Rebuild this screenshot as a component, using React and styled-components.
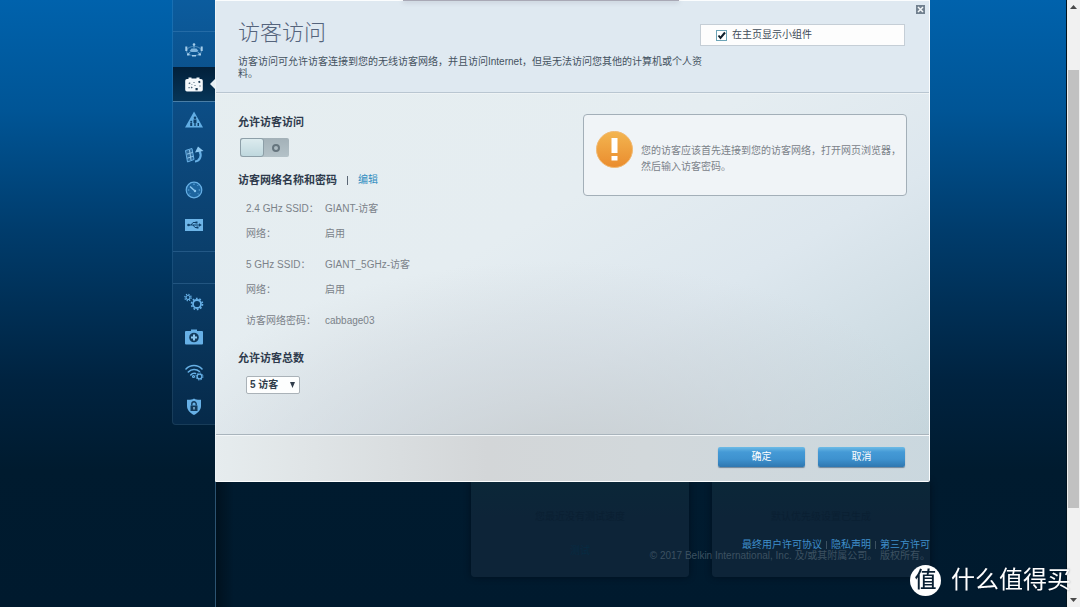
import React, { useState } from "react";
import styled, { createGlobalStyle, css } from "styled-components";

const GlobalStyle = createGlobalStyle`
  * { box-sizing: border-box; }
  body {
    margin: 0;
    background: #001a2e;
    color: #6d7680;
    font: 10px/14px "Liberation Sans", "Noto Sans CJK SC", sans-serif;
  }
  h1, h2, p, dl, dd { margin: 0; }
  a { text-decoration: none; }
`;

const Page = styled.div`
  display: flex;
  min-height: 100vh;
  background: linear-gradient(#0062ac 0, #005596 110px, #003c6c 230px, #002340 380px, #001b2f 470px, #001a2e 100%);
`;

const Main = styled.div`
  flex: 1;
  display: flex;
  justify-content: center;
  border-right: 1px solid #00131f;
`;

const Shell = styled.div`
  flex: 1;
  max-width: 794px;
  padding-left: 36px;
  display: flex;
`;

/* ---------- side navigation ---------- */

const Nav = styled.nav`
  flex: none;
  align-self: flex-start;
  width: 43px;
  border: solid rgba(110, 165, 210, 0.22);
  border-width: 0 0 1px 1px;
  border-radius: 0 0 0 4px;
  background: linear-gradient(#0b5c9e, #0c4a80 130px, #0a3e6a 260px, #062a4a 420px) padding-box;
`;

const NavGap = styled.div`
  height: 32px;
  border-bottom: 1px solid rgba(110, 165, 210, 0.25);
`;

const NavGroup = styled.div`
  padding-bottom: ${(p) => (p.$divided ? "9px" : "0")};
  border-bottom: ${(p) => (p.$divided ? "1px solid rgba(110, 165, 210, 0.25)" : "0")};
`;

const NavLink = styled.a`
  position: relative;
  display: flex;
  align-items: center;
  justify-content: center;
  height: 35px;
  ${(p) =>
    p.$active &&
    css`
      background: linear-gradient(#02203a, #063558);
      border-bottom: 1px solid #4a7ea6;
      &::after {
        content: "";
        position: absolute;
        right: 0;
        border: solid transparent;
        border-width: 5px 5px 5px 0;
        border-right-color: #e6eef3;
      }
    `}
`;

/* ---------- dialog ---------- */

const Content = styled.div`
  flex: 1;
  min-width: 0;
  display: flex;
  flex-direction: column;
`;

const Dialog = styled.section`
  position: relative;
  border: 1px solid #fbfdfe;
  border-left-color: #edf3f6;
  border-radius: 0 0 2px 0;
  background:
    radial-gradient(ellipse 420px 220px at 48% 100%, rgba(198, 202, 204, 0.85), rgba(203, 209, 214, 0.5) 55%, rgba(210, 218, 226, 0) 100%),
    linear-gradient(150deg, #e6eef0 0, #e5edf1 45%, #dde7ee 65%, #c0d2d9 100%);
`;

const TopEdge = styled.div`
  position: absolute;
  top: -1px;
  left: 187px;
  width: 276px;
  height: 1px;
  background: #a9a9b6;
  box-shadow: 0 1px 4px rgba(90, 90, 110, 0.5);
`;

const CloseButton = styled.button`
  position: absolute;
  top: 4px;
  right: 4px;
  display: flex;
  padding: 0;
  border: 0;
  background: none;
`;

const Header = styled.header`
  padding: 19px 24px 12px 22px;
  background: #dfe9f1;
  border-bottom: 1px solid #b9c6d1;
`;

const TitleRow = styled.div`
  display: flex;
  justify-content: space-between;
  align-items: flex-end;
`;

const Title = styled.h1`
  color: #55647c;
  font-size: 22px;
  font-weight: 300;
  line-height: 26px;
`;

const WidgetOption = styled.label`
  display: flex;
  align-items: center;
  gap: 5px;
  width: 205px;
  height: 22px;
  padding-left: 15px;
  border: 1px solid #c5ced6;
  background: #fdfdfd;
  color: #3e4a57;
`;

const CheckWrap = styled.span`
  display: grid;
  width: 11px;
  height: 11px;
  & > * { grid-area: 1 / 1; }
  svg { pointer-events: none; }
`;

const CheckInput = styled.input`
  appearance: none;
  width: 11px;
  height: 11px;
  margin: 0;
  border: 1px solid #6ba3b6;
  background: #fff;
  &:not(:checked) + svg { visibility: hidden; }
`;

const Description = styled.p`
  max-width: 470px;
  margin-top: 10px;
  color: #44525f;
  line-height: 12px;
`;

const Body = styled.div`
  display: flex;
  justify-content: space-between;
  align-items: flex-start;
  padding: 20px 22px 40px;
  border-top: 1px solid #eef3f5;
  border-bottom: 1px solid #a9b4bc;
`;

const Settings = styled.div`
  display: flex;
  flex-direction: column;
  align-items: flex-start;
`;

const Heading = styled.h2`
  color: #2e3a4c;
  font-size: 11px;
  font-weight: 700;
  line-height: 16px;
`;

const HeadingRow = styled.div`
  display: flex;
  align-items: center;
  gap: 10px;
  margin: 15px 0 14px;
`;

const Bar = styled.span`
  width: 1px;
  height: 9px;
  background: #5a6674;
`;

const EditLink = styled.a`
  color: #2f8cc0;
`;

const Toggle = styled.button`
  display: flex;
  align-items: center;
  width: 49px;
  height: 19px;
  margin: 8px 0 0 2px;
  padding: 0;
  border: 0;
  border-radius: 2px;
  background: linear-gradient(#a3b1b8, #b4c2c8);
`;

const Knob = styled.span`
  width: 24px;
  height: 19px;
  border: 1px solid #8d9fa8;
  border-radius: 3px;
  background: linear-gradient(#dcebee, #bfd8de);
`;

const Ring = styled.span`
  width: 8px;
  height: 8px;
  margin-left: 8px;
  border: 2px solid #66757e;
  border-radius: 50%;
`;

const Details = styled.dl`
  display: grid;
  gap: 17px;
  margin: 0 0 22px 8px;
`;

const DetailGroup = styled.div`
  display: grid;
  grid-template-columns: 79px auto;
  row-gap: 11px;
  color: #7b8289;
`;

const SelectWrap = styled.span`
  display: grid;
  align-items: center;
  margin: 10px 0 0 8px;
  & > * { grid-area: 1 / 1; }
  svg { justify-self: end; margin-right: 5px; pointer-events: none; }
`;

const Select = styled.select`
  appearance: none;
  width: 54px;
  height: 18px;
  padding: 0 3px;
  border: 1px solid #aab2b8;
  border-radius: 2px;
  background: #fdfefe;
  color: #323e4c;
  font: inherit;
  font-weight: 700;
`;

const Alert = styled.aside`
  flex: none;
  display: flex;
  gap: 8px;
  width: 324px;
  height: 82px;
  padding: 16px 0 16px 12px;
  border: 1px solid #a3afb8;
  border-radius: 4px;
  background: #f0f4f7;
  color: #7b8289;
  line-height: 16px;
  svg { flex: none; }
  p { margin-top: 12px; }
`;

const Footer = styled.footer`
  display: flex;
  justify-content: flex-end;
  gap: 13px;
  padding: 11px 24px 14px;
  border-top: 1px solid #f3f7f9;
  background: linear-gradient(90deg, #e6ecee, #d3d6d8 38%, #d2d8db 60%, rgba(203, 216, 223, 0.9));
`;

const ActionButton = styled.button`
  width: 87px;
  height: 20px;
  padding: 0;
  border: 0;
  border-radius: 2px;
  background: linear-gradient(#6dbbe6 0, #459ad6 25%, #3e92cf 60%, #2f77b0 100%);
  box-shadow: 0 1px 1px rgba(50, 80, 110, 0.6);
  color: #fff;
  font: inherit;
`;

/* ---------- page area under the dialog ---------- */

const Backdrop = styled.div`
  flex: 1;
  display: grid;
  align-items: start;
  border-left: 1px solid #2c5472;
  background: linear-gradient(90deg, rgba(0, 0, 0, 0.35), transparent 18px);
  & > * { grid-area: 1 / 1; }
`;

const Cards = styled.div`
  display: flex;
  justify-content: flex-end;
  gap: 23px;
  padding-bottom: 30px;
`;

const Card = styled.div`
  display: flex;
  flex-direction: column;
  align-items: center;
  gap: 20px;
  width: 218px;
  height: 95px;
  padding-top: 28px;
  border-radius: 0 0 4px 4px;
  background: linear-gradient(#0b2738, #0d2438 35px);
  box-shadow: 0 0 6px rgba(0, 10, 20, 0.6);
  color: #0a1f32;
`;

const CardLink = styled.a`
  color: #072b42;
`;

const Legal = styled.div`
  justify-self: end;
  padding-top: 57px;
  color: #3c5161;
  text-align: right;
  line-height: 11px;
`;

const LegalLinks = styled.div`
  display: flex;
  justify-content: flex-end;
  align-items: center;
  gap: 4px;
  a { color: #3f8fcb; }
`;

const LegalBar = styled.span`
  width: 1px;
  height: 8px;
  background: #3c5161;
`;

/* ---------- scroll bar and watermark ---------- */

const ScrollTrack = styled.div`
  flex: none;
  position: sticky;
  top: 0;
  display: flex;
  flex-direction: column;
  width: 13px;
  height: 100vh;
  padding: 0 1px;
  background: #f1f1f1;
`;

const ScrollArrow = styled.span`
  display: flex;
  align-items: center;
  justify-content: center;
  height: 14px;
`;

const ScrollSpace = styled.span`
  flex: ${(p) => p.$share};
  background: ${(p) => (p.$thumb ? "#c1c1c1" : "none")};
`;

const Watermark = styled.div`
  position: fixed;
  right: 9px;
  bottom: 11px;
  display: flex;
  align-items: center;
  gap: 10px;
  color: #fff;
  font-size: 24px;
  line-height: 32px;
  text-shadow: 0 0 2px rgba(0, 20, 40, 0.5);
`;

const Seal = styled.span`
  width: 31px;
  height: 31px;
  border-radius: 50%;
  background: #fff;
  color: #0a2033;
  font-size: 22px;
  font-weight: 500;
  line-height: 30px;
  text-align: center;
  text-shadow: none;
`;

/* ---------- icons ---------- */

const Icon = styled.svg.attrs({ width: 20, height: 20, viewBox: "0 0 20 20", "aria-hidden": true })`
  display: block;
  fill: none;
  stroke: ${(p) => p.$tone || "#67b0e6"};
`;

const MapIcon = () => (
  <Icon $tone="#4583b4">
    <ellipse cx="10" cy="11" rx="7.500" ry="4.500" strokeWidth="1.200" />
    <path d="M5.500 11 7.500 8.500h5l2 2.500-2 1h-5z" fill="#7cb3dc" stroke="none" />
    <path d="M3.500 14l3-2M16.500 14l-3-2M10 5v3.500" stroke="#6ea8d3" />
    <g fill="#a5cdea" stroke="none">
      <circle cx="10" cy="4.500" r="1.300" />
      <path d="M1.300 6.500h2v4.500h-2zM16.700 6.500h2v4.500h-2z" />
      <path d="M3 13.500h2.500v2H3zM14.500 13.500H17v2h-2.500zM8 15h4v1.500H8z" />
    </g>
  </Icon>
);

const CaseIcon = () => (
  <Icon $tone="none">
    <path d="M3 5h1.500V3.500h3V4.500h5V3.500h3V5H17a1.800 1.800 0 0 1 1.800 1.800v9a1.800 1.800 0 0 1-1.800 1.800H3a1.800 1.800 0 0 1-1.800-1.800v-9A1.800 1.800 0 0 1 3 5z" fill="#f4f8fb" />
    <g fill="#4a6478">
      <path d="M4.500 9l1.500-.8.5 1.300-1.500.8zM9.500 8h1v1h-1zM4.500 13h1.200v1.200H4.500zM7.500 12.500l1.200.8-.8 1.200-1.200-.8zM10.500 11h1v1h-1zM7.500 10h.8v.8h-.8z" />
      <path d="M14 7.500l1.800-.8.8 1.500-1.600 1zM11.500 14h2.200v2.200h-2.200zM15.500 11.500h1v1h-1z" fill="#1c3a53" />
    </g>
  </Icon>
);

const ParentalIcon = () => (
  <Icon $tone="none">
    <path d="M10 1.500 19 17.500H1z" fill="#62ade3" />
    <g fill="#0e406b">
      <circle cx="11" cy="7.800" r="1.300" />
      <path d="M9.500 9.500h3v3.500h-.8v3h-1.400v-3h-.8z" />
      <circle cx="7.200" cy="11.800" r="1" />
      <path d="M6.200 13h2v3h-2zM13.500 13H15v3h-1.500z" />
    </g>
  </Icon>
);

const PriorityIcon = () => (
  <Icon>
    <path d="M1.500 5.500 8 3.500 10 14.500 3.500 17z" fill="#2f6c9f" />
    <path d="M2.800 9.200l6-1.800M3.300 13.200l6-2M5.500 5l1.500 10" stroke="#8cc3ea" />
    <path d="M11 16.500c5-.5 7-5.500 4.500-10.500" strokeWidth="2.200" />
    <path d="M11 7.500 14 1.500l5.500 4.500z" fill="#8cc7f0" stroke="none" />
  </Icon>
);

const GaugeIcon = () => (
  <Icon>
    <circle cx="10" cy="10" r="7.800" fill="#1d659f" strokeWidth="1.200" />
    <path d="M6 6.500l5 4.500" strokeWidth="1.500" stroke="#8cc7f0" />
    <circle cx="11" cy="11" r="1.200" fill="#8cc7f0" stroke="none" />
    <path d="M10 3.500V5M3.800 10h1.500M14.700 10h1.500M13.500 5.800l1-1M5 14.500l1-1M14 13.500l1 1" />
  </Icon>
);

const UsbIcon = () => (
  <Icon $tone="#0e406b">
    <path d="M1 4h18v12H1z" fill="#6db5e8" stroke="none" />
    <path d="M4 10h12M7 10l2-2.500h3M9 10l2 2.500h2" />
    <circle cx="4.500" cy="10" r="1.300" fill="#0e406b" stroke="none" />
    <path d="M15 8.300l2.800 1.700-2.800 1.700zM11.500 6.500h2v2h-2zM12.500 11.500h2v2h-2z" fill="#0e406b" stroke="none" />
  </Icon>
);

const GearsIcon = () => (
  <Icon>
    <circle cx="13" cy="12" r="4" strokeWidth="1.800" />
    <circle cx="13" cy="12" r="5.500" strokeWidth="1.600" strokeDasharray="1.728 1.728" />
    <circle cx="4" cy="5.500" r="2" strokeWidth="1.200" />
    <circle cx="4" cy="5.500" r="3.200" strokeWidth="1.200" strokeDasharray="1.257 1.257" />
  </Icon>
);

const FirstAidIcon = () => (
  <Icon $tone="none">
    <path d="M7 4V2.500h6V4h5a1 1 0 0 1 1 1v11.500a1 1 0 0 1-1 1H2a1 1 0 0 1-1-1V5a1 1 0 0 1 1-1z" fill="#67b0e6" />
    <circle cx="10" cy="10.500" r="4.800" fill="#123a5c" />
    <path d="M9 7.500h2v2h2v2h-2v2H9v-2H7v-2h2z" fill="#8cc7f0" />
  </Icon>
);

const WifiIcon = () => (
  <Icon strokeWidth="1.600" strokeLinecap="round">
    <path d="M2 7c4.500-4.700 11.500-4.700 16 0M4.300 10c3.300-3.300 8-3.300 11.200-.5M6.800 13c1.300-1.500 3-2 4.700-1.500" />
    <circle cx="9.500" cy="14.500" r="1" strokeWidth="1.200" />
    <circle cx="15.500" cy="14.500" r="2.400" strokeWidth="1.400" />
    <circle cx="15.500" cy="14.500" r="3.500" strokeWidth="1" strokeDasharray="1.374 1.374" strokeLinecap="butt" />
  </Icon>
);

const ShieldIcon = () => (
  <Icon $tone="none">
    <path d="M10 1.500c2 1.300 4.500 1.500 7 1.300v6.200c0 4-3 7-7 9-4-2-7-5-7-9V2.800c2.500.2 5 0 7-1.300z" fill="#67b0e6" />
    <path d="M6.500 8.500h7v5.500h-7z" fill="#123a5c" />
    <path d="M7.800 8.500V7a2.200 2.200 0 0 1 4.400 0v1.500" stroke="#123a5c" strokeWidth="1.400" />
    <path d="M9.400 10h1.200v2.500H9.400z" fill="#a5d3f2" />
  </Icon>
);

const topLinks = [
  { label: "网络图", icon: MapIcon },
  { label: "访客访问", icon: CaseIcon, active: true },
  { label: "家长控制", icon: ParentalIcon },
  { label: "媒体优先级", icon: PriorityIcon },
  { label: "速度测试", icon: GaugeIcon },
  { label: "USB 存储", icon: UsbIcon },
];

const bottomLinks = [
  { label: "连接", icon: GearsIcon },
  { label: "故障排除", icon: FirstAidIcon },
  { label: "无线", icon: WifiIcon },
  { label: "安全", icon: ShieldIcon },
];

const NavLinks = ({ items }) =>
  items.map(({ label, icon: Glyph, active }) => (
    <NavLink key={label} href="#" aria-label={label} $active={active}>
      <Glyph />
    </NavLink>
  ));

const networks = [
  [
    ["2.4 GHz SSID：", "GIANT-访客"],
    ["网络：", "启用"],
  ],
  [
    ["5 GHz SSID：", "GIANT_5GHz-访客"],
    ["网络：", "启用"],
  ],
  [["访客网络密码：", "cabbage03"]],
];

export default function App() {
  const [allowed, setAllowed] = useState(false);

  return (
    <>
      <GlobalStyle />
      <Page lang="zh-CN">
        <Main>
          <Shell>
            <Nav>
              <NavGap />
              <NavGroup $divided>
                <NavLinks items={topLinks} />
              </NavGroup>
              <NavGap />
              <NavGroup>
                <NavLinks items={bottomLinks} />
              </NavGroup>
            </Nav>
            <Content>
              <Dialog>
                <Header>
                  <TitleRow>
                    <Title>访客访问</Title>
                    <WidgetOption>
                      <CheckWrap>
                        <CheckInput type="checkbox" defaultChecked />
                        <svg width="11" height="11" viewBox="0 0 11 11" aria-hidden="true">
                          <path d="M2.500 5.500 4.500 8 9 2.500" fill="none" stroke="#10202c" strokeWidth="2" />
                        </svg>
                      </CheckWrap>
                      在主页显示小组件
                    </WidgetOption>
                  </TitleRow>
                  <Description>
                    访客访问可允许访客连接到您的无线访客网络，并且访问Internet，但是无法访问您其他的计算机或个人资料。
                  </Description>
                </Header>
                <Body>
                  <Settings>
                    <Heading id="allow">允许访客访问</Heading>
                    <Toggle
                      type="button"
                      role="switch"
                      aria-checked={allowed}
                      aria-labelledby="allow"
                      onClick={() => setAllowed(!allowed)}
                    >
                      <Knob />
                      <Ring />
                    </Toggle>
                    <HeadingRow>
                      <Heading>访客网络名称和密码</Heading>
                      <Bar />
                      <EditLink href="#">编辑</EditLink>
                    </HeadingRow>
                    <Details>
                      {networks.map((rows, i) => (
                        <DetailGroup key={i}>
                          {rows.map(([term, value]) => (
                            <React.Fragment key={term}>
                              <dt>{term}</dt>
                              <dd>{value}</dd>
                            </React.Fragment>
                          ))}
                        </DetailGroup>
                      ))}
                    </Details>
                    <Heading as="label" htmlFor="guests">允许访客总数</Heading>
                    <SelectWrap>
                      <Select id="guests" defaultValue="5">
                        <option value="5">5 访客</option>
                      </Select>
                      <svg width="5" height="6" viewBox="0 0 5 6" aria-hidden="true">
                        <path d="M0 0h5L2.500 6z" fill="#323e4c" />
                      </svg>
                    </SelectWrap>
                  </Settings>
                  <Alert>
                    <svg width="37" height="37" viewBox="0 0 37 37" aria-hidden="true">
                      <defs>
                        <linearGradient id="amber" x1="0" y1="0" x2="0" y2="1">
                          <stop offset="0" stopColor="#f3b550" />
                          <stop offset="1" stopColor="#ea8c2e" />
                        </linearGradient>
                      </defs>
                      <circle cx="18.500" cy="18.500" r="18" fill="url(#amber)" stroke="#f0b872" />
                      <path d="M15.500 7h6v15h-6zM15.500 25h6v4.500h-6z" fill="#fff" />
                    </svg>
                    <p>您的访客应该首先连接到您的访客网络，打开网页浏览器，然后输入访客密码。</p>
                  </Alert>
                </Body>
                <Footer>
                  <ActionButton type="button">确定</ActionButton>
                  <ActionButton type="button">取消</ActionButton>
                </Footer>
                <TopEdge />
                <CloseButton type="button" aria-label="关闭">
                  <svg width="9" height="9" viewBox="0 0 9 9" aria-hidden="true">
                    <path d="M0 0h9v9H0z" fill="#72818f" />
                    <path d="M2 2l5 5M7 2 2 7" stroke="#f2f6f8" strokeWidth="1.500" />
                  </svg>
                </CloseButton>
              </Dialog>
              <Backdrop>
                <Cards>
                  <Card>
                    <span>您最近没有测试速度</span>
                    <CardLink href="#">测试</CardLink>
                  </Card>
                  <Card>
                    <span>默认优先级设置已生成</span>
                  </Card>
                </Cards>
                <Legal>
                  <LegalLinks>
                    <a href="#">最终用户许可协议</a>
                    <LegalBar />
                    <a href="#">隐私声明</a>
                    <LegalBar />
                    <a href="#">第三方许可</a>
                  </LegalLinks>
                  © 2017 Belkin International, Inc. 及/或其附属公司。 版权所有。
                </Legal>
              </Backdrop>
            </Content>
          </Shell>
        </Main>
        <ScrollTrack>
          <ScrollArrow>
            <svg width="7" height="4" viewBox="0 0 7 4" aria-hidden="true">
              <path d="M0 4h7L3.500 0z" fill="#4a4a4a" />
            </svg>
          </ScrollArrow>
          <ScrollSpace $share={56} />
          <ScrollSpace $share={438} $thumb />
          <ScrollSpace $share={85} />
          <ScrollArrow>
            <svg width="7" height="4" viewBox="0 0 7 4" aria-hidden="true">
              <path d="M0 0h7L3.500 4z" fill="#4a4a4a" />
            </svg>
          </ScrollArrow>
        </ScrollTrack>
        <Watermark>
          <Seal>值</Seal>
          什么值得买
        </Watermark>
      </Page>
    </>
  );
}
